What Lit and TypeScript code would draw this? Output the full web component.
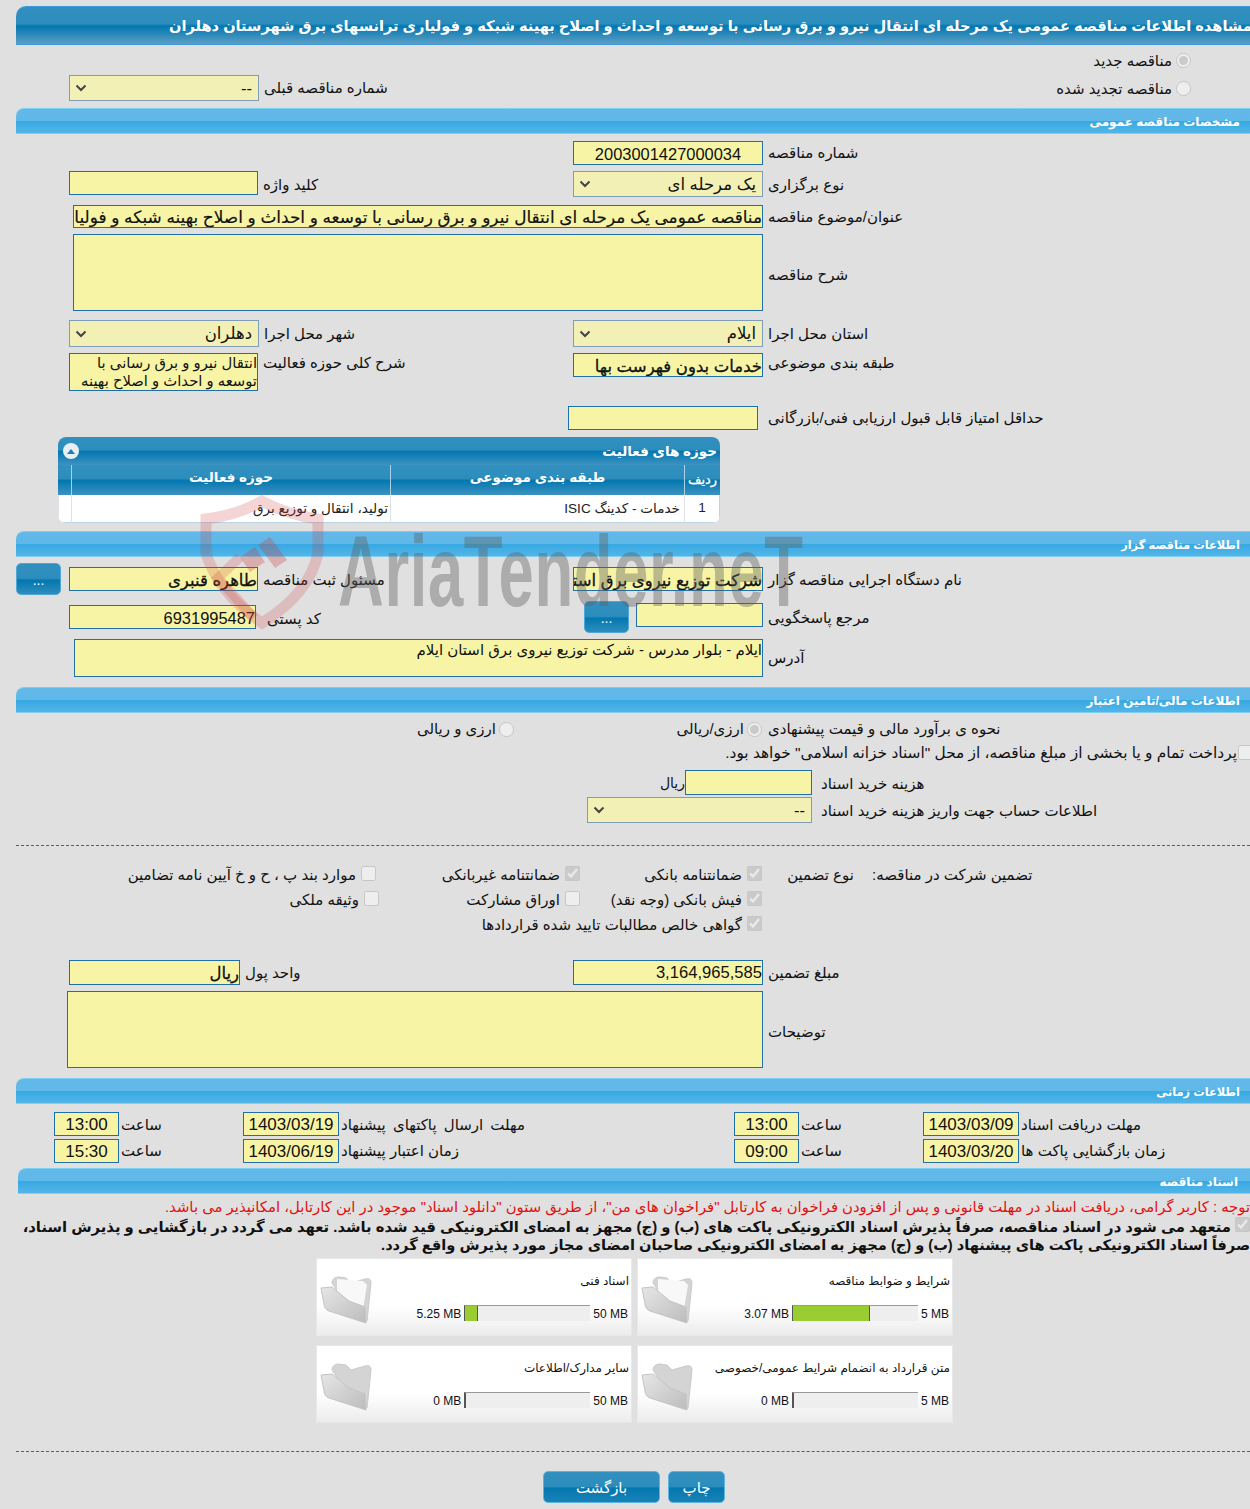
import { LitElement, html, css, svg } from "lit";
import { customElement } from "lit/decorators.js";

const chevron = html`<svg class="chev" width="12" height="8" viewBox="0 0 12 8"><path d="M1.500 1.500 6 6l4.500-4.500" fill="none" stroke="#444" stroke-width="2"/></svg>`;
const folder = (open: boolean) => html`<svg class="folder" width="56" height="52" viewBox="0 0 56 52">
  <defs><linearGradient id="fg" x1="0" y1="0" x2="1" y2="1"><stop offset="0" stop-color="#e6e6e6"/><stop offset="1" stop-color="#bcbcbc"/></linearGradient></defs>
  <path d="M13 10c0-4 3-6 7-6l7 1 5 5 14-4c4-1 6 0 6 4l-4 38-12-3z" fill="#d4d4d4" stroke="#cacaca"/>
  ${open ? svg`<path d="M18 6l26 2 4 4-5 30-25-8z" fill="#f8f8f8"/>` : ""}
  <path d="M2 15l11-1 17 14 16 6 1 16-37-12c-3-1-5-4-5-7z" fill="url(#fg)" stroke="#c4c4c4"/>
</svg>`;

@customElement("app-root")
export class AppRoot extends LitElement {
  static styles = css`
    :host { display: block; width: 1250px; height: 1509px; background: #e0e0e0; position: relative; overflow: hidden;
      font-family: "Liberation Sans", "DejaVu Sans", sans-serif; font-size: 15px; color: #111; }
    * { box-sizing: border-box; }
    .title { margin: 6px 0 0 16px; height: 39px; border: 1px solid #3d98dc; border-width: 1px 0; border-top-left-radius: 10px;
      background: linear-gradient(#3290bf 0, #2c8dbd 45%, #0377b0 52%, #5b9fc4 100%);
      color: #fff; font-weight: bold; font-size: 14.6px; display: flex; align-items: center; padding-left: 153px; overflow: hidden; white-space: nowrap; }
    .bar { height: 26px; margin-left: 16px; border-top: 1px solid #7ccdf2; border-bottom: 1px solid #82cff2; border-top-left-radius: 8px;
      background: linear-gradient(#62b9e9 0, #60b8e8 48%, #38a9e2 52%, #52b5e8 100%);
      color: #fff; font-weight: bold; font-size: 12px; text-align: right; padding: 6px 10px 0 0; }
    .bar span { display: inline-block; }
    .bar.s11 { font-size: 11.4px; }
    .bar.b5 { margin-left: 18px; padding-right: 12px; }
    .row { display: flex; }
    .cl { width: 504px; margin-left: 69px; display: flex; flex-shrink: 0; }
    .cr { display: flex; flex: 1; }
    .lab { white-space: nowrap; direction: rtl; margin-left: 5px; padding-top: 3px; }
    .i { height: 24px; border: 1px solid #1f6fa8; background: #f7f5a5; font-size: 16.45px; direction: rtl; white-space: nowrap; overflow: hidden; line-height: 24px; flex-shrink: 0; }
    .med { font-size: 16.5px; -webkit-text-stroke: .3px #111; }
    .sel { height: 26px; border: 1px solid #7f9db9; background: #f2f0b4; font-size: 16.5px; display: flex; align-items: center; justify-content: space-between; padding: 0 6px 0 5px; flex-shrink: 0; white-space: nowrap; }
    .sel span { direction: rtl; }
    .w189 { width: 189px; } .w190 { width: 190px; }
    .ltrnum { direction: ltr; text-align: center; }
    .rightnum { direction: ltr; text-align: right; }
    .top { height: 63px; display: flex; flex-direction: column; }
    .radio { display: flex; direction: rtl; align-items: center; white-space: nowrap; padding-right: 59px; }
    input { margin: 0; }
    input[type=radio] { width: 15px; height: 15px; margin-left: 4px; }
    input[type=checkbox] { width: 15px; height: 15px; flex-shrink: 0; }
    .topA { height: 27px; padding-top: 4px; justify-content: flex-start; }
    .topB { display: flex; height: 32px; align-items: center; }
    .topB .cl { margin-left: 69px; width: 0; flex: 1; align-items: center; }
    .topB .lab, .topB .radio span { padding-top: 2px; }
    .r1 { margin-top: 7px; } .r2 { margin-top: 6px; } .r3 { margin-top: 8px; } .r4 { margin-top: 6px; height: 77px; }
    .r2 .lab { padding-top: 5px; }
    .r5 { margin-top: 9px; } .r6 { margin-top: 6px; height: 38px; } .r7 { margin-top: 15px; }
    .r6 .lab { padding-top: 1px; }
    .sel.tall { height: 27px; width: 190px; }
    .full { width: 690px; margin-left: 73px; }
    .h23 { height: 23px; line-height: 23px; font-size: 16.9px; -webkit-text-stroke: .2px #111; }
    .area { height: 77px; }
    .lab.mid { align-self: center; padding-top: 0; }
    .r4 .lab.mid { padding-top: 4px; }
    .r8 .lab.mid, .r14 .lab.mid { padding-top: 2px; }
    .mini { width: 189px; height: 38px; font-size: 14.8px; line-height: 18px; white-space: normal; }
    .r7 .i { margin-left: 568px; width: 190px; }
    .r7 .lab { margin-left: 10px; }
    .panel { margin: 7px 0 0 58px; width: 662px; height: 86px; border-radius: 8px; overflow: hidden; background: #fff; }
    .ph { height: 28px; position: relative; color: #fff; font-weight: bold; font-size: 13.5px; direction: rtl; padding: 6px 3px 0 0;
      background: linear-gradient(#3290bf 0, #2c8dbd 45%, #0377b0 52%, #3d92c0 100%); }
    .collapse { position: absolute; left: 5px; top: 6px; width: 16px; height: 16px; border-radius: 50%; background: #e8eef3; display: flex; align-items: center; justify-content: center; }
    .collapse::before { content: ""; border: 4px solid transparent; border-bottom: 5px solid #1b7fb3; border-top: 0; }
    .tg { display: grid; grid-template-columns: 13px 319px 294px 36px; direction: ltr; }
    .th { height: 30px; color: #fff; font-weight: bold; font-size: 13.5px; text-align: center; line-height: 26px; border-left: 1px solid #a8d0e6; direction: rtl; white-space: nowrap;
      background: linear-gradient(#3290bf 0, #2c8dbd 45%, #0377b0 52%, #3d92c0 100%); }
    .th:first-child { border-left: 0; }
    .th.narrow { font-size: 13px; font-weight: normal; -webkit-text-stroke: .3px #fff; line-height: 29px; }
    .td { height: 28px; border-left: 1px solid #dde3e8; border-bottom: 1px solid #bcd3e2; direction: rtl; font-size: 13.6px; padding: 5px 2px 0; color: #222; white-space: nowrap; }
    .td:first-child { border-left: 1px solid #bcd3e2; }
    .td:last-child { border-right: 1px solid #bcd3e2; }
    .td.c { text-align: center; }
    .td.p4 { padding-right: 4px; }
    .mt8 { margin-top: 8px; } .mt10 { margin-top: 10px; } .mt5 { margin-top: 5px; }
    .r8 { margin-top: 6px; height: 32px; align-items: center; padding-left: 16px; }
    .btn { width: 45px; height: 32px; border-radius: 5px; border: 1px solid #4ea7d6; color: #fff; font-size: 14px; text-align: center; line-height: 32px; flex-shrink: 0;
      background: linear-gradient(#3290bf 0, #2c8dbd 48%, #0377b0 54%, #2f8dbd 100%); }
    .r8 .cl { margin-left: 8px; align-items: center; }
    .r8 .cr { align-items: center; }
    .r9 { margin-top: 6px; height: 32px; }
    .r9 .cl { align-items: flex-end; height: 28px; }
    .r9 .cl .i { width: 187px; }
    .r9 .cl .lab { margin-left: 11px; padding-top: 0; align-self: flex-end; padding-bottom: 1px; }
    .r9 .cr { align-items: flex-start; }
    .r9 .btn { margin-left: 11px; }
    .r9 .cr .i { width: 127px; margin: 2px 0 0 7px; }
    .r9 .cr .lab { padding-top: 8px; }
    .r10 { margin-top: 6px; height: 38px; }
    .addr { width: 689px; margin-left: 74px; height: 38px; font-size: 15px; line-height: 20px; }
    .r11 { margin-top: 5px; height: 22px; display: grid; grid-template-columns: 514px 248px auto; align-items: center; }
    .rd { display: flex; direction: rtl; align-items: center; white-space: nowrap; justify-content: flex-start; }
    .rd input { margin: 0 0 0 3px; }
    .r11 .lab { padding-top: 0; margin-left: 6px; justify-self: start; }
    .r12 { height: 25px; display: flex; direction: rtl; align-items: center; white-space: nowrap; font-size: 15.4px; }
    .r12 input { margin: 0 -3px 0 1px; }
    .r13 { margin-top: 5px; height: 25px; display: flex; padding-left: 661px; }
    .r13 .unit { width: 24px; direction: rtl; padding-top: 5px; white-space: nowrap; font-size: 14px; }
    .r13 .i { width: 127px; height: 25px; }
    .r13 .lab, .r14 .lab { margin-left: 9px; }
    .r13 .lab { padding-top: 5px; }
    .r14 { margin-top: 2px; height: 26px; display: flex; padding-left: 587px; }
    .sel.wide { width: 225px; }
    .dash { border-top: 1px dashed #1f6f9f; margin-left: 16px; height: 0; }
    .d1 { margin-top: 22px; }
    .guar { margin-top: 16px; display: flex; align-items: flex-start; }
    .gcols { width: 762px; flex-shrink: 0; direction: rtl; }
    .gr { display: grid; grid-template-columns: 182px 204px 1fr; height: 25px; align-items: center; }
    .gc { display: flex; align-items: center; white-space: nowrap; }
    .gc input { margin: -3px 0 0 5px; }
    .gc.shift { margin-right: -3px; }
    .gside { display: flex; height: 25px; align-items: center; white-space: nowrap; direction: ltr; }
    .gside span { direction: rtl; }
    .gside .s1 { margin-left: 25px; width: 67px; }
    .gside .s2 { margin-left: 18px; }
    .r15 { margin-top: 23px; }
    .r15 .cl .i { width: 171px; height: 25px; }
    .r15 .cr .i { width: 190px; height: 25px; font-size: 16.6px; }
    .r15 .lab { padding-top: 4px; }
    .r16 { margin-top: 6px; height: 77px; }
    .r16 .i { width: 696px; height: 77px; margin-left: 67px; }
    .r16 .lab { align-self: center; padding-top: 5px; }
    .tr { display: grid; grid-template-columns: 189px 491px 189px 1fr; padding-left: 54px; height: 24px; }
    .tr1 { margin-top: 8px; } .tr2 { margin-top: 3px; }
    .tr1 .lab { padding-top: 4px; }
    .tc { display: flex; }
    .tc .i { font-size: 17px; }
    .t65 { width: 65px; text-align: center; direction: ltr; }
    .t96 { width: 96px; text-align: center; direction: ltr; }
    .tc .lab { margin-left: 2px; }
    .tc:nth-child(2) .lab { word-spacing: 3px; }
    .tr2 .tc:nth-child(2) .lab { word-spacing: 0; }
    .note { color: #e01010; display: flex; padding-left: 165px; white-space: nowrap; height: 22px; overflow: hidden; align-items: center; margin-top: 2px; font-size: 14.85px; }
    .note span, .title span { direction: rtl; flex-shrink: 0; }
    .pledge { direction: rtl; position: relative; font-weight: bold; font-size: 14.8px; line-height: 18px; white-space: nowrap; height: 36px; }
    .pledge input { position: absolute; right: 0; top: -1px; }
    .pledge .l1 { display: block; padding-right: 19px; }
    .pledge .l2 { display: block; font-size: 14.6px; }
    .cards { margin: 4px 0 0 316px; width: 637px; display: grid; grid-template-columns: 316px 316px; column-gap: 5px; row-gap: 9px; direction: ltr; }
    .card { height: 78px; position: relative; direction: rtl; background: linear-gradient(#fff 0, #fff 62%, #ececec 100%); border: 1px solid #e8e8e8; }
    .card .t { position: absolute; right: 2px; top: 15px; font-size: 12px; white-space: nowrap; }
    .card .p { position: absolute; right: 3px; top: 46px; display: flex; align-items: center; font-size: 12px; direction: ltr; white-space: nowrap; height: 16px; }
    .card .p span { padding-top: 1px; }
    .track { width: 126px; height: 16px; background: #eee; border-top: 1px solid #999; margin: 0 3px; display: flex; border-left: 1px solid #555; }
    .fill { background: #9acd32; border-right: 1px solid #555; height: 100%; }
    .folder { position: absolute; left: 2px; top: 14px; }
    .d2 { margin-top: 28px; }
    .actions { margin: 19px 0 0 543px; display: flex; gap: 8px; }
    .ab { height: 32px; border: 1px solid #5cb4e0; border-radius: 5px; color: #fff; font-size: 15px; text-align: center; line-height: 31px;
      background: linear-gradient(#3290bf 0, #2c8dbd 48%, #0377b0 54%, #1a82b6 100%); direction: rtl; }
    .a1 { width: 117px; } .a2 { width: 57px; }
    .wm { position: absolute; left: 0; top: 0; width: 1250px; height: 640px; pointer-events: none; }
    .wmt { position: absolute; left: 338px; top: 514px; font: bold 100px "Liberation Sans", sans-serif; color: rgba(95,95,95,.4); transform-origin: 0 50%; transform: scaleX(.634); white-space: nowrap; letter-spacing: 1px; }
    .wms { position: absolute; left: 198px; top: 493px; }
  `;

  private card(title: string, used: string, max: string, pct: number, open: boolean) {
    return html`<div class="card">
      <div class="t">${title}</div>
      <div class="p"><span>${used}</span><div class="track"><div class="fill" style="width:${pct}%"></div></div><span>${max}</span></div>
      ${folder(open)}
    </div>`;
  }

  private timeCell(v: string, w: string, l: string) {
    return html`<div class="tc"><div class="i ${w}">${v}</div><div class="lab">${l}</div></div>`;
  }

  render() {
    return html`
      <div class="title"><span>مشاهده اطلاعات مناقصه عمومی یک مرحله ای انتقال نیرو و برق رسانی با توسعه و احداث و اصلاح بهینه شبکه و فولیاری ترانسهای برق شهرستان دهلران</span></div>
      <div class="top">
        <div class="radio topA"><input type="radio" checked disabled /><span>مناقصه جدید</span></div>
        <div class="topB">
          <div class="cl"><div class="sel w190">${chevron}<span>--</span></div><div class="lab mid">شماره مناقصه قبلی</div></div>
          <div class="radio"><input type="radio" disabled /><span>مناقصه تجدید شده</span></div>
        </div>
      </div>
      <div class="bar"><span>مشخصات مناقصه عمومی</span></div>
      <div class="row r1"><div class="cl"></div><div class="cr"><div class="i w190 ltrnum">2003001427000034</div><div class="lab">شماره مناقصه</div></div></div>
      <div class="row r2">
        <div class="cl"><div class="i w189"></div><div class="lab">کلید واژه</div></div>
        <div class="cr"><div class="sel w190">${chevron}<span>یک مرحله ای</span></div><div class="lab">نوع برگزاری</div></div>
      </div>
      <div class="row r3"><div class="i full h23">مناقصه عمومی یک مرحله ای انتقال نیرو و برق رسانی با توسعه و احداث و اصلاح بهینه شبکه و فولیاری ترانسهای برق شهرستان دهلران</div><div class="lab">عنوان/موضوع مناقصه</div></div>
      <div class="row r4"><div class="i full area"></div><div class="lab mid">شرح مناقصه</div></div>
      <div class="row r5">
        <div class="cl"><div class="sel tall">${chevron}<span>دهلران</span></div><div class="lab mid">شهر محل اجرا</div></div>
        <div class="cr"><div class="sel tall">${chevron}<span>ایلام</span></div><div class="lab mid">استان محل اجرا</div></div>
      </div>
      <div class="row r6">
        <div class="cl"><div class="i mini">انتقال نیرو و برق رسانی با توسعه و احداث و اصلاح بهینه</div><div class="lab">شرح کلی حوزه فعالیت</div></div>
        <div class="cr"><div class="i w190 med">خدمات بدون فهرست بها</div><div class="lab">طبقه بندی موضوعی</div></div>
      </div>
      <div class="row r7"><div class="i"></div><div class="lab">حداقل امتیاز قابل قبول ارزیابی فنی/بازرگانی</div></div>

      <div class="panel">
        <div class="ph">حوزه های فعالیت<span class="collapse"></span></div>
        <div class="tg">
          <div class="th"></div><div class="th">حوزه فعالیت</div><div class="th">طبقه بندی موضوعی</div><div class="th narrow">ردیف</div>
          <div class="td"></div><div class="td">تولید، انتقال و توزیع برق</div><div class="td p4">خدمات - کدینگ ISIC</div><div class="td c">1</div>
        </div>
      </div>

      <div class="bar mt8 s11"><span>اطلاعات مناقصه گزار</span></div>
      <div class="row r8">
        <div class="btn">...</div>
        <div class="cl"><div class="i w189 med">طاهره قنبری</div><div class="lab mid">مسئول ثبت مناقصه</div></div>
        <div class="cr"><div class="i w190 med">شرکت توزیع نیروی برق استان ایلام</div><div class="lab mid">نام دستگاه اجرایی مناقصه گزار</div></div>
      </div>
      <div class="row r9">
        <div class="cl"><div class="i rightnum">6931995487</div><div class="lab">کد پستی</div></div>
        <div class="cr"><div class="btn">...</div><div class="i"></div><div class="lab">مرجع پاسخگویی</div></div>
      </div>
      <div class="row r10"><div class="i addr">ایلام - بلوار مدرس - شرکت توزیع نیروی برق استان ایلام</div><div class="lab mid">آدرس</div></div>

      <div class="bar mt10"><span>اطلاعات مالی/تامین اعتبار</span></div>
      <div class="r11">
        <div class="rd"><input type="radio" disabled /><span>ارزی و ریالی</span></div>
        <div class="rd"><input type="radio" checked disabled /><span>ارزی/ریالی</span></div>
        <div class="lab">نحوه ی برآورد مالی و قیمت پیشنهادی</div>
      </div>
      <div class="r12"><input type="checkbox" disabled /><span>پرداخت تمام و یا بخشی از مبلغ مناقصه، از محل "اسناد خزانه اسلامی" خواهد بود.</span></div>
      <div class="r13"><div class="unit">ریال</div><div class="i"></div><div class="lab">هزینه خرید اسناد</div></div>
      <div class="r14"><div class="sel wide">${chevron}<span>--</span></div><div class="lab mid">اطلاعات حساب جهت واریز هزینه خرید اسناد</div></div>
      <div class="dash d1"></div>

      <div class="guar">
        <div class="gcols">
          <div class="gr">
            <div class="gc"><input type="checkbox" checked disabled /><span>ضمانتنامه بانکی</span></div>
            <div class="gc"><input type="checkbox" checked disabled /><span>ضمانتنامه غیربانکی</span></div>
            <div class="gc"><input type="checkbox" disabled /><span>موارد بند پ ، ح و خ آیین نامه تضامین</span></div>
          </div>
          <div class="gr">
            <div class="gc"><input type="checkbox" checked disabled /><span>فیش بانکی (وجه نقد)</span></div>
            <div class="gc"><input type="checkbox" disabled /><span>اوراق مشارکت</span></div>
            <div class="gc shift"><input type="checkbox" disabled /><span>وثیقه ملکی</span></div>
          </div>
          <div class="gr">
            <div class="gc"><input type="checkbox" checked disabled /><span>گواهی خالص مطالبات تایید شده قراردادها</span></div>
          </div>
        </div>
        <div class="gside"><span class="s1">نوع تضمین</span><span class="s2">تضمین شرکت در مناقصه:</span></div>
      </div>

      <div class="row r15">
        <div class="cl"><div class="i med">ریال</div><div class="lab">واحد پول</div></div>
        <div class="cr"><div class="i rightnum">3,164,965,585</div><div class="lab">مبلغ تضمین</div></div>
      </div>
      <div class="row r16"><div class="i"></div><div class="lab">توضیحات</div></div>

      <div class="bar mt10 s11"><span>اطلاعات زمانی</span></div>
      <div class="tr tr1">
        ${this.timeCell("13:00", "t65", "ساعت")}
        ${this.timeCell("1403/03/19", "t96", "مهلت ارسال پاکتهای پیشنهاد")}
        ${this.timeCell("13:00", "t65", "ساعت")}
        ${this.timeCell("1403/03/09", "t96", "مهلت دریافت اسناد")}
      </div>
      <div class="tr tr2">
        ${this.timeCell("15:30", "t65", "ساعت")}
        ${this.timeCell("1403/06/19", "t96", "زمان اعتبار پیشنهاد")}
        ${this.timeCell("09:00", "t65", "ساعت")}
        ${this.timeCell("1403/03/20", "t96", "زمان بازگشایی پاکت ها")}
      </div>

      <div class="bar b5 mt5"><span>اسناد مناقصه</span></div>
      <div class="note"><span>توجه : کاربر گرامی، دریافت اسناد در مهلت قانونی و پس از افزودن فراخوان به کارتابل "فراخوان های من"، از طریق ستون "دانلود اسناد" موجود در این کارتابل، امکانپذیر می باشد.</span></div>
      <div class="pledge"><input type="checkbox" checked disabled /><span class="l1">متعهد می شود در اسناد مناقصه، صرفاً پذیرش اسناد الکترونیکی پاکت های (ب) و (ج) مجهز به امضای الکترونیکی قید شده باشد. تعهد می گردد در بازگشایی و پذیرش اسناد،</span><span class="l2">صرفاً اسناد الکترونیکی پاکت های پیشنهاد (ب) و (ج) مجهز به امضای الکترونیکی صاحبان امضای مجاز مورد پذیرش واقع گردد.</span></div>
      <div class="cards">
        ${this.card("اسناد فنی", "5.25 MB", "50 MB", 10.5, true)}
        ${this.card("شرایط و ضوابط مناقصه", "3.07 MB", "5 MB", 61.4, true)}
        ${this.card("سایر مدارک/اطلاعات", "0 MB", "50 MB", 0, false)}
        ${this.card("متن قرارداد به انضمام شرایط عمومی/خصوصی", "0 MB", "5 MB", 0, false)}
      </div>
      <div class="dash d2"></div>
      <div class="actions"><div class="ab a1">بازگشت</div><div class="ab a2">چاپ</div></div>

      <div class="wm">
        <svg class="wms" width="130" height="140" viewBox="0 0 130 140">
          <path d="M8 26Q40 22 64 8Q90 22 120 26V60Q112 100 64 130Q20 100 8 60Z" fill="none" stroke="rgba(205,60,60,.22)" stroke-width="11"/>
          <path d="M60 52l12-8 17 23-12 8zM42 64l15-10 10 15-15 10z" fill="rgba(205,60,60,.3)"/>
          <path d="M42 64L20 85l36 40" fill="none" stroke="rgba(205,60,60,.22)" stroke-width="10"/>
        </svg>
        <div class="wmt">AriaTender.neT</div>
      </div>
    `;
  }
}
